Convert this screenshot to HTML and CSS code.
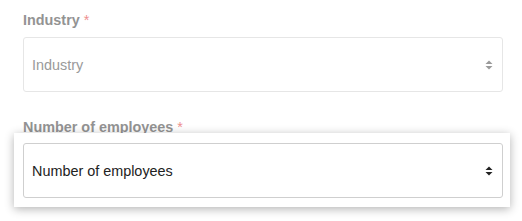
FILE: index.html
```html
<!DOCTYPE html>
<html lang="en">
  <head>
    <meta charset="UTF-8" />
    <meta name="viewport" content="width=device-width, initial-scale=1.0" />
    <title>Company details</title>
    <link rel="stylesheet" href="styles.css">
  </head>
  <body>
    <div class="form">
      <!-- Industry -->
      <div class="field muted">
        <label class="field-label">Industry <span class="req">*</span></label>
        <div class="select">
          <span class="select-text">Industry</span>
          <svg class="arrows" width="8" height="10" viewBox="0 0 8 10">
            <path d="M0.5 4 L4 0.5 L7.5 4 Z" />
            <path d="M0.5 6 L4 9.5 L7.5 6 Z" />
          </svg>
        </div>
      </div>

      <!-- Number of employees (highlighted) -->
      <div class="field">
        <label class="field-label">Number of employees <span class="req">*</span></label>
        <div class="spotlight">
          <div class="select active">
            <span class="select-text">Number of employees</span>
            <svg class="arrows" width="8" height="10" viewBox="0 0 8 10">
              <path d="M0.5 4 L4 0.5 L7.5 4 Z" />
              <path d="M0.5 6 L4 9.5 L7.5 6 Z" />
            </svg>
          </div>
        </div>
      </div>
    </div>
  </body>
</html>
```

FILE: styles.css
```css
* {
  margin: 0;
  padding: 0;
  box-sizing: border-box;
}
body {
  background: #fff;
  font-family: "Liberation Sans", Arial, sans-serif;
}
.form {
  padding: 10px 19px 0 23px;
}
.field {
  margin-bottom: 25px;
}
.field-label {
  display: block;
  font-size: 14.4px;
  font-weight: bold;
  line-height: 20px;
  color: #939393;
  margin-bottom: 7px;
}
.req {
  color: #ee8f8f;
  font-weight: normal;
}
.select {
  height: 55px;
  display: flex;
  align-items: center;
  justify-content: space-between;
  padding: 0 9px 0 8px;
  border: 1px solid #e6e6e6;
  border-radius: 3px;
  background: #fff;
  font-size: 14.4px;
  color: #9a9a9a;
}
.arrows {
  fill: #9a9a9a;
}
.select.active {
  border-color: #cfcfcf;
  color: #222;
}
.select.active .arrows {
  fill: #222;
}
.spotlight {
  position: relative;
  margin: -11px -7px 0 -9px;
  padding: 10px 7px 9px 9px;
  background: #fff;
  box-shadow: 0 2px 9px rgba(0, 0, 0, 0.3);
}
```
